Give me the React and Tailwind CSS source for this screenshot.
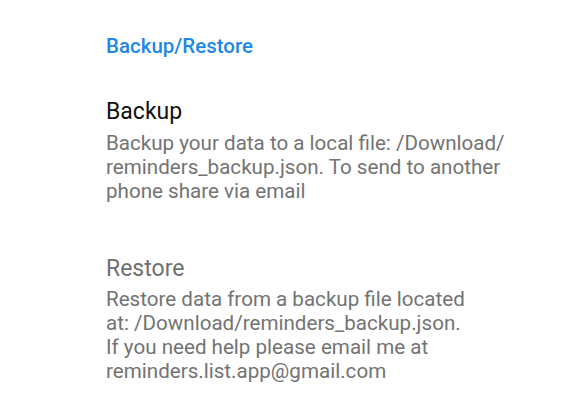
const App = () => {
  return (
    <div
      className="w-[575px] h-[404px] bg-white overflow-hidden"
      style={{ fontFamily: "Roboto, 'Noto Sans', sans-serif" }}
    >
      <div className="pl-[106px] pr-[20px]">
        <div className="pt-[34px] text-[20.5px] leading-[24px] font-medium text-[#1e88e5]">
          Backup/Restore
        </div>

        <div className="mt-[40px]">
          <div className="text-[23px] leading-[28px] text-[#111111]">Backup</div>
          <div className="mt-[5px] text-[20.6px] leading-[24px] text-[#737373]">
            Backup your data to a local file: /Download/
            <br />
            reminders_backup.json. To send to another
            <br />
            phone share via email
          </div>
        </div>

        <div className="mt-[52px]">
          <div className="text-[23px] leading-[28px] text-[#6f6f6f]">Restore</div>
          <div className="mt-[4px] text-[20.6px] leading-[24px] text-[#737373]">
            Restore data from a backup file located
            <br />
            at: /Download/reminders_backup.json.
            <br />
            If you need help please email me at
            <br />
            reminders.list.app@gmail.com
          </div>
        </div>
      </div>
    </div>
  );
};

export default App;
